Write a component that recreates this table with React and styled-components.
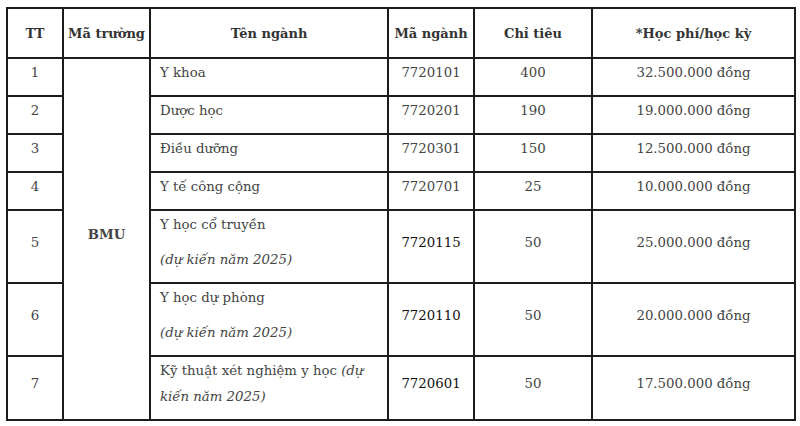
import React from "react";
import styled, { createGlobalStyle } from "styled-components";

const GlobalStyle = createGlobalStyle`
  body {
    margin: 0;
    background: #fff;
    font-family: "DejaVu Serif", "Liberation Serif", serif;
  }
`;

const Wrapper = styled.div`
  padding: 7px 6px;
`;

const Table = styled.table`
  width: 788px;
  border-collapse: collapse;
  table-layout: fixed;
  font-size: 13.3px;
  color: #444;
`;

const Th = styled.th`
  border: 2px solid #1c1c1c;
  height: 48px;
  padding: 0 2px;
  font-size: 13px;
  font-weight: 700;
  color: #333;
  text-align: center;
  vertical-align: middle;
  white-space: nowrap;
`;

const Td = styled.td`
  border: 2px solid #1c1c1c;
  padding: 1px 9px 0;
  text-align: ${(props) => props.$align || "center"};
  vertical-align: middle;
  font-weight: ${(props) => (props.$bold ? 700 : 400)};
  color: ${(props) => (props.$dark ? "#111" : "#444")};
`;

const P = styled.p`
  margin: 0 0 9px;
  line-height: 26px;
`;

const Note = styled.em`
  font-style: italic;
`;

const rows = [
  { tt: 1, name: ["Y khoa"], code: "7720101", quota: 400, fee: "32.500.000 đồng" },
  { tt: 2, name: ["Dược học"], code: "7720201", quota: 190, fee: "19.000.000 đồng" },
  { tt: 3, name: ["Điều dưỡng"], code: "7720301", quota: 150, fee: "12.500.000 đồng" },
  { tt: 4, name: ["Y tế công cộng"], code: "7720701", quota: 25, fee: "10.000.000 đồng" },
  {
    tt: 5,
    name: ["Y học cổ truyền", <Note>(dự kiến năm 2025)</Note>],
    code: "7720115",
    quota: 50,
    fee: "25.000.000 đồng",
    dark: true,
  },
  {
    tt: 6,
    name: ["Y học dự phòng", <Note>(dự kiến năm 2025)</Note>],
    code: "7720110",
    quota: 50,
    fee: "20.000.000 đồng",
    dark: true,
  },
  {
    tt: 7,
    name: [
      <>
        Kỹ thuật xét nghiệm y học <Note>(dự kiến năm 2025)</Note>
      </>,
    ],
    code: "7720601",
    quota: 50,
    fee: "17.500.000 đồng",
    dark: true,
  },
];

const App = () => {
  return (
    <Wrapper>
      <GlobalStyle />
      <Table>
        <colgroup>
          <col style={{ width: 56 }} />
          <col style={{ width: 87 }} />
          <col style={{ width: 238 }} />
          <col style={{ width: 86 }} />
          <col style={{ width: 118 }} />
          <col style={{ width: 203 }} />
        </colgroup>
        <thead>
          <tr>
            <Th>TT</Th>
            <Th>Mã trường</Th>
            <Th>Tên ngành</Th>
            <Th>Mã ngành</Th>
            <Th>Chỉ tiêu</Th>
            <Th>*Học phí/học kỳ</Th>
          </tr>
        </thead>
        <tbody>
          {rows.map((row, i) => (
            <tr key={row.tt}>
              <Td>
                <P>{row.tt}</P>
              </Td>
              {i === 0 && (
                <Td rowSpan={rows.length} $bold>
                  <P>BMU</P>
                </Td>
              )}
              <Td $align="left">
                {row.name.map((line, j) => (
                  <P key={j}>{line}</P>
                ))}
              </Td>
              <Td $dark={row.dark}>
                <P>{row.code}</P>
              </Td>
              <Td>
                <P>{row.quota}</P>
              </Td>
              <Td>
                <P>{row.fee}</P>
              </Td>
            </tr>
          ))}
        </tbody>
      </Table>
    </Wrapper>
  );
};

export default App;
